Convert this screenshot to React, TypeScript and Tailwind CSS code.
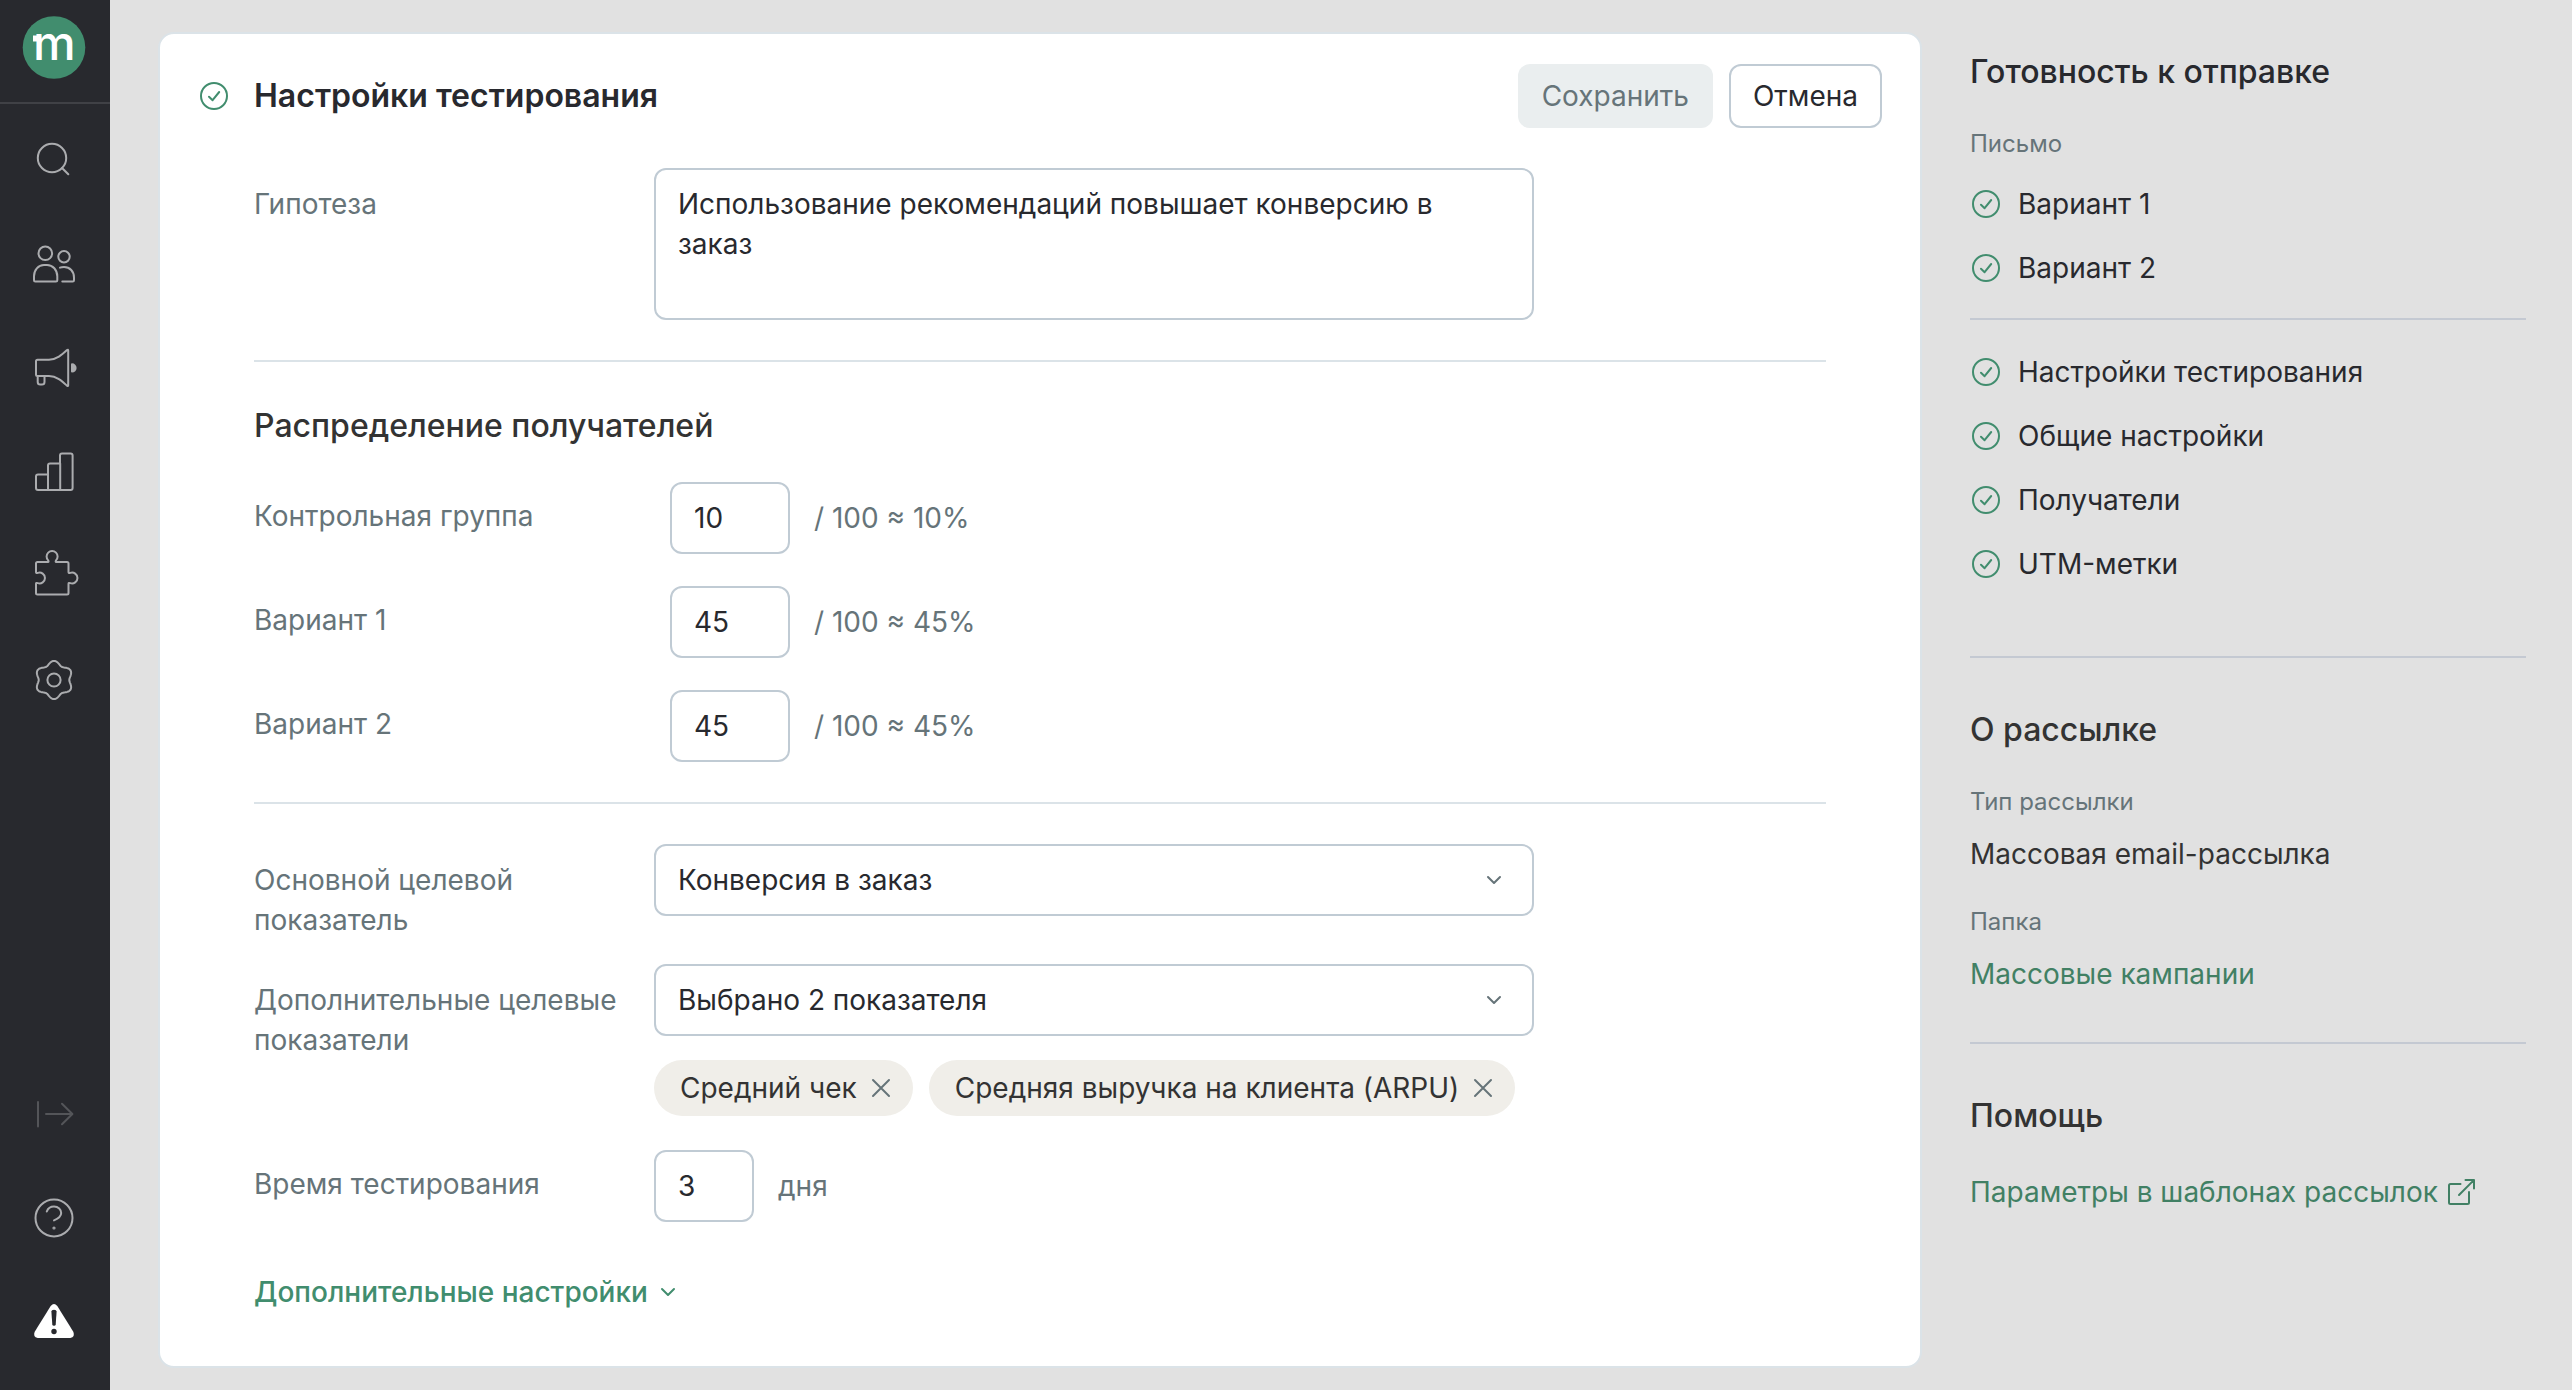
import type { ReactNode } from "react";

const gearPath =
  Array.from({ length: 120 }, (_, i) => {
    const a = (i / 120) * Math.PI * 2;
    const r = 17.2 + 1.9 * Math.cos(6 * a);
    const x = (32 + r * Math.sin(a)).toFixed(2);
    const y = (32 - r * Math.cos(a)).toFixed(2);
    return `${i === 0 ? "M" : "L"}${x} ${y}`;
  }).join("") + "Z";

function NavButton({ label, children, className = "text-[#abacaf]" }: { label: string; children: ReactNode; className?: string }) {
  return (
    <button type="button" aria-label={label} className={`flex h-[104px] w-full items-center justify-center pr-[2px] ${className}`}>
      <svg viewBox="0 0 64 64" className="size-16" fill="none" stroke="currentColor" strokeWidth="2" strokeLinecap="round" strokeLinejoin="round">
        {children}
      </svg>
    </button>
  );
}

function Sidebar() {
  return (
    <nav className="flex w-[110px] shrink-0 flex-col bg-[#28292e] pb-4">
      <div className="border-b-2 border-[#404146]">
        <svg viewBox="0 0 110 102" className="block w-full" role="img" aria-label="Mindbox">
          <circle cx="54" cy="47.500" r="31.300" fill="#418d6e" />
          <text x="33" y="60" fontSize="48" fontWeight="500" fontFamily="Inter, sans-serif" fill="#fff">m</text>
          <rect x="33" y="35.500" width="6" height="6" fill="#fff" />
        </svg>
      </div>
      <div className="flex flex-1 flex-col pt-1">
        <NavButton label="Поиск">
          <circle cx="30" cy="30" r="14.2" />
          <path d="M40 40l6.3 6.3" />
        </NavButton>
        <NavButton label="Клиенты">
          <circle cx="23.3" cy="21.3" r="6.8" />
          <circle cx="42" cy="24.7" r="5.7" />
          <path d="M12 48.3v-4c0-6.300 4.200-11.300 10-11.300h3c5.800 0 10.300 5 10.300 11.300v4q0 1.300-1.300 1.300h-20.700q-1.300 0-1.300-1.300z" />
          <path d="M38 35.700q1.600-.7 4-.7c6 0 10 4.500 10 10.400v2.900q0 1.300-1.300 1.300h-10.400" />
        </NavButton>
        <NavButton label="Кампании">
          <path d="M15.500 23.700h11.500c7.500 0 13-5 18-9.600q1.200-.9 1.200.5v34.600q0 1.400-1.200.5c-5-4.600-10.500-9.700-18-9.700h-11.500q-1.500 0-1.500-1.500v-13.300q0-1.500 1.500-1.500z" />
          <path d="M15.700 40.500v5.500q0 2.500 2.500 2.500h1.800q2.500 0 2.500-2.500v-5.500" />
          <path d="M50 28.300a3.600 3.600 0 0 1 0 7.200z" fill="currentColor" />
        </NavButton>
        <NavButton label="Отчёты">
          <path d="M26 50v-24.500q0-2 2-2h10v-8q0-2 2-2h8.600q2 0 2 2v32.500q0 2-2 2h-32.600q-2 0-2-2v-11.500q0-2 2-2h10M38.200 23.500v26.500" />
        </NavButton>
        <NavButton label="Интеграции">
          <path d="M15.500 18h10.500q1 0 .2-1.600a5.500 5.500 0 1 1 7.800 0q-.8 1.600.2 1.600h10.800q1.500 0 1.500 1.500v8.800q0 1.200 1.800.6a5.400 5.400 0 1 1 0 10.200q-1.800-.6-1.800.6v9.300q0 1.500-1.500 1.500h-29.500q-1.500 0-1.500-1.500v-9.300q0-1.200 1.800-.6a5.400 5.400 0 1 0 0-10.200q-1.800.6-1.800-.6v-8.800q0-1.500 1.500-1.500z" />
        </NavButton>
        <NavButton label="Настройки">
          <path d={gearPath} />
          <circle cx="32" cy="32" r="6.6" />
        </NavButton>
      </div>
      <NavButton label="Развернуть меню" className="text-[#545559]">
        <path d="M16 20v24.500M24 32h26M40 21.800l10.400 10.200l-10.400 10.200" />
      </NavButton>
      <NavButton label="Справка">
        <circle cx="32" cy="32" r="18.500" />
        <path d="M24.800 25.500q1.800-4.900 7.200-4.900c4.300 0 7.200 2.900 7.200 6.500c0 4-4 6-7.200 7.300" />
        <circle cx="32" cy="42" r=".6" />
      </NavButton>
      <NavButton label="Предупреждения" className="text-white">
        <path d="M28.700 16q3.300-4 6.600 0l16 25.800q2 5.200-3 6.200h-32.600q-5-1-3-6.200z" fill="currentColor" stroke="none" />
        <path d="M29.400 21.500q0-1.800 2.600-1.800t2.600 1.800l-.9 13q-.1 1.300-1.700 1.300t-1.700-1.300z" fill="#28292e" stroke="none" />
        <circle cx="32" cy="41.500" r="2.700" fill="#28292e" stroke="none" />
      </NavButton>
    </nav>
  );
}

function CheckCircle() {
  return (
    <svg viewBox="0 0 28 28" className="size-7 shrink-0 text-[#418d6e]" fill="none" stroke="currentColor" strokeWidth="2" strokeLinecap="round" strokeLinejoin="round" aria-hidden="true">
      <circle cx="14" cy="14" r="13" />
      <path d="M9 14.800l3.600 3.400l6.600-8.200" />
    </svg>
  );
}

function Chevron({ className = "" }: { className?: string }) {
  return (
    <svg viewBox="0 0 16 16" className={`size-4 ${className}`} fill="none" stroke="currentColor" strokeWidth="2" strokeLinecap="round" strokeLinejoin="round" aria-hidden="true">
      <path d="M2 5l6 6l6-6" />
    </svg>
  );
}

const field = "rounded-xl border-2 border-[#c0cbd4] bg-white text-[#28292e] outline-none";

function SelectBox({ id, value }: { id: string; value: string }) {
  return (
    <div className="relative">
      <select id={id} className={`h-[72px] w-full appearance-none px-[22px] ${field}`}>
        <option>{value}</option>
      </select>
      <Chevron className="pointer-events-none absolute top-7 right-8 text-[#667479]" />
    </div>
  );
}

function Share({ id, label, value }: { id: string; label: string; value: number }) {
  return (
    <div className="flex">
      <label htmlFor={id} className="w-[416px] shrink-0 pt-[14px] text-[#667479]">{label}</label>
      <input id={id} type="text" defaultValue={value} className={`h-[72px] w-[120px] px-[22px] ${field}`} />
      <span className="pt-4 pl-6 text-[#667479]">/ 100 ≈ {value}%</span>
    </div>
  );
}

function Chip({ text }: { text: string }) {
  return (
    <li className="flex h-14 items-center gap-[14px] rounded-full bg-[#f0eee9] pr-[22px] pl-[26px] whitespace-nowrap text-[#333]">
      {text}
      <button type="button" aria-label={`Удалить: ${text}`} className="text-[#667479]">
        <svg viewBox="0 0 20 20" className="size-5" fill="none" stroke="currentColor" strokeWidth="2" strokeLinecap="round" aria-hidden="true">
          <path d="M2 2l16 16M18 2l-16 16" />
        </svg>
      </button>
    </li>
  );
}

function TestSettings() {
  return (
    <main className="mt-8 ml-12 flex min-w-0 flex-1 flex-col self-start rounded-2xl border-2 border-[#dbe3e8] bg-white">
      <header className="flex items-center pt-[30px] pr-[38px] pl-10">
        <CheckCircle />
        <h1 className="ml-[26px] flex-1 text-[32px] leading-10 font-semibold">Настройки тестирования</h1>
        <button type="button" disabled className="h-16 rounded-xl bg-[#eaeeef] px-6 text-[#667479]">Сохранить</button>
        <button type="button" className="ml-4 h-16 rounded-xl border-2 border-[#c0cbd4] px-[22px]">Отмена</button>
      </header>

      <form className="mr-[94px] ml-[94px] pb-[54px]">
        <section className="flex border-b-2 border-[#dbe3e8] pt-10 pb-10">
          <label htmlFor="hypothesis" className="w-[400px] shrink-0 pt-4 text-[#667479]">Гипотеза</label>
          <textarea
            id="hypothesis"
            className={`block h-[152px] w-full max-w-[880px] resize-none px-[22px] py-[14px] ${field}`}
            defaultValue="Использование рекомендаций повышает конверсию в заказ"
          />
        </section>

        <section className="flex flex-col gap-8 border-b-2 border-[#dbe3e8] pt-11 pb-10">
          <h2 className="mb-1 text-[32px] leading-10 font-medium text-[#333]">Распределение получателей</h2>
          <Share id="control" label="Контрольная группа" value={10} />
          <Share id="variant1" label="Вариант 1" value={45} />
          <Share id="variant2" label="Вариант 2" value={45} />
        </section>

        <section className="pt-10">
          <div className="flex">
            <label htmlFor="main-metric" className="w-[400px] shrink-0 pt-4 text-[#667479]">Основной целевой<br />показатель</label>
            <div className="w-full max-w-[880px]">
              <SelectBox id="main-metric" value="Конверсия в заказ" />
            </div>
          </div>
          <div className="mt-6 flex">
            <label htmlFor="extra-metrics" className="w-[400px] shrink-0 pt-4 text-[#667479]">Дополнительные целевые<br />показатели</label>
            <div className="w-full max-w-[880px]">
              <SelectBox id="extra-metrics" value="Выбрано 2 показателя" />
              <ul className="mt-6 flex gap-4">
                <Chip text="Средний чек" />
                <Chip text="Средняя выручка на клиента (ARPU)" />
              </ul>
            </div>
          </div>
          <div className="mt-[34px] flex">
            <label htmlFor="duration" className="w-[400px] shrink-0 pt-[14px] text-[#667479]">Время тестирования</label>
            <input id="duration" type="text" defaultValue="3" className={`h-[72px] w-[100px] px-[22px] ${field}`} />
            <span className="pt-4 pl-6 text-[#667479]">дня</span>
          </div>
          <button type="button" className="mt-[50px] flex items-center gap-3 font-medium text-[#418d6e]">
            Дополнительные настройки
            <Chevron />
          </button>
        </section>
      </form>
    </main>
  );
}

function CheckItem({ text }: { text: string }) {
  return (
    <li className="flex items-center gap-[18px] pl-[2px]">
      <CheckCircle />
      {text}
    </li>
  );
}

function Summary() {
  return (
    <aside className="w-[650px] shrink-0 pt-[52px] pr-[46px] pl-12">
      <h2 className="text-[32px] leading-10 font-medium">Готовность к отправке</h2>
      <h3 className="mt-8 text-2xl leading-10 text-[#667479]">Письмо</h3>
      <ul className="mt-5 flex flex-col gap-6 border-b-2 border-[#c4c9d2] pb-[30px]">
        <CheckItem text="Вариант 1" />
        <CheckItem text="Вариант 2" />
      </ul>
      <ul className="mt-8 flex flex-col gap-6 border-b-2 border-[#c4c9d2] pb-[72px]">
        <CheckItem text="Настройки тестирования" />
        <CheckItem text="Общие настройки" />
        <CheckItem text="Получатели" />
        <CheckItem text="UTM-метки" />
      </ul>
      <section className="border-b-2 border-[#c4c9d2] pt-[52px] pb-12 text-[#333]">
        <h2 className="text-[32px] leading-10 font-medium">О рассылке</h2>
        <dl>
          <dt className="mt-8 text-2xl leading-10 text-[#667479]">Тип рассылки</dt>
          <dd className="mt-3">Массовая email-рассылка</dd>
          <dt className="mt-7 text-2xl leading-10 text-[#667479]">Папка</dt>
          <dd className="mt-3">
            <a href="#campaigns" className="text-[#418064]">Массовые кампании</a>
          </dd>
        </dl>
      </section>
      <section className="pt-[52px]">
        <h2 className="text-[32px] leading-10 font-medium text-[#333]">Помощь</h2>
        <a href="#help" className="mt-9 flex items-center gap-[10px] text-[#418064]">
          Параметры в шаблонах рассылок
          <svg viewBox="0 0 28 28" className="size-7" fill="none" stroke="currentColor" strokeWidth="2" strokeLinecap="round" strokeLinejoin="round" aria-hidden="true">
            <path d="M12.500 6h-10q-1.500 0-1.500 1.500v17q0 1.500 1.500 1.500h17q1.500 0 1.500-1.500v-10.500M17.500 2h8.500v8.500M25.600 2.400l-14.600 14.600" />
          </svg>
        </a>
      </section>
    </aside>
  );
}

export default function App() {
  return (
    <div className="flex min-h-screen bg-[#e1e1e1] font-['Inter',sans-serif] text-[28px] leading-10 text-[#28292e]">
      <Sidebar />
      <TestSettings />
      <Summary />
    </div>
  );
}
